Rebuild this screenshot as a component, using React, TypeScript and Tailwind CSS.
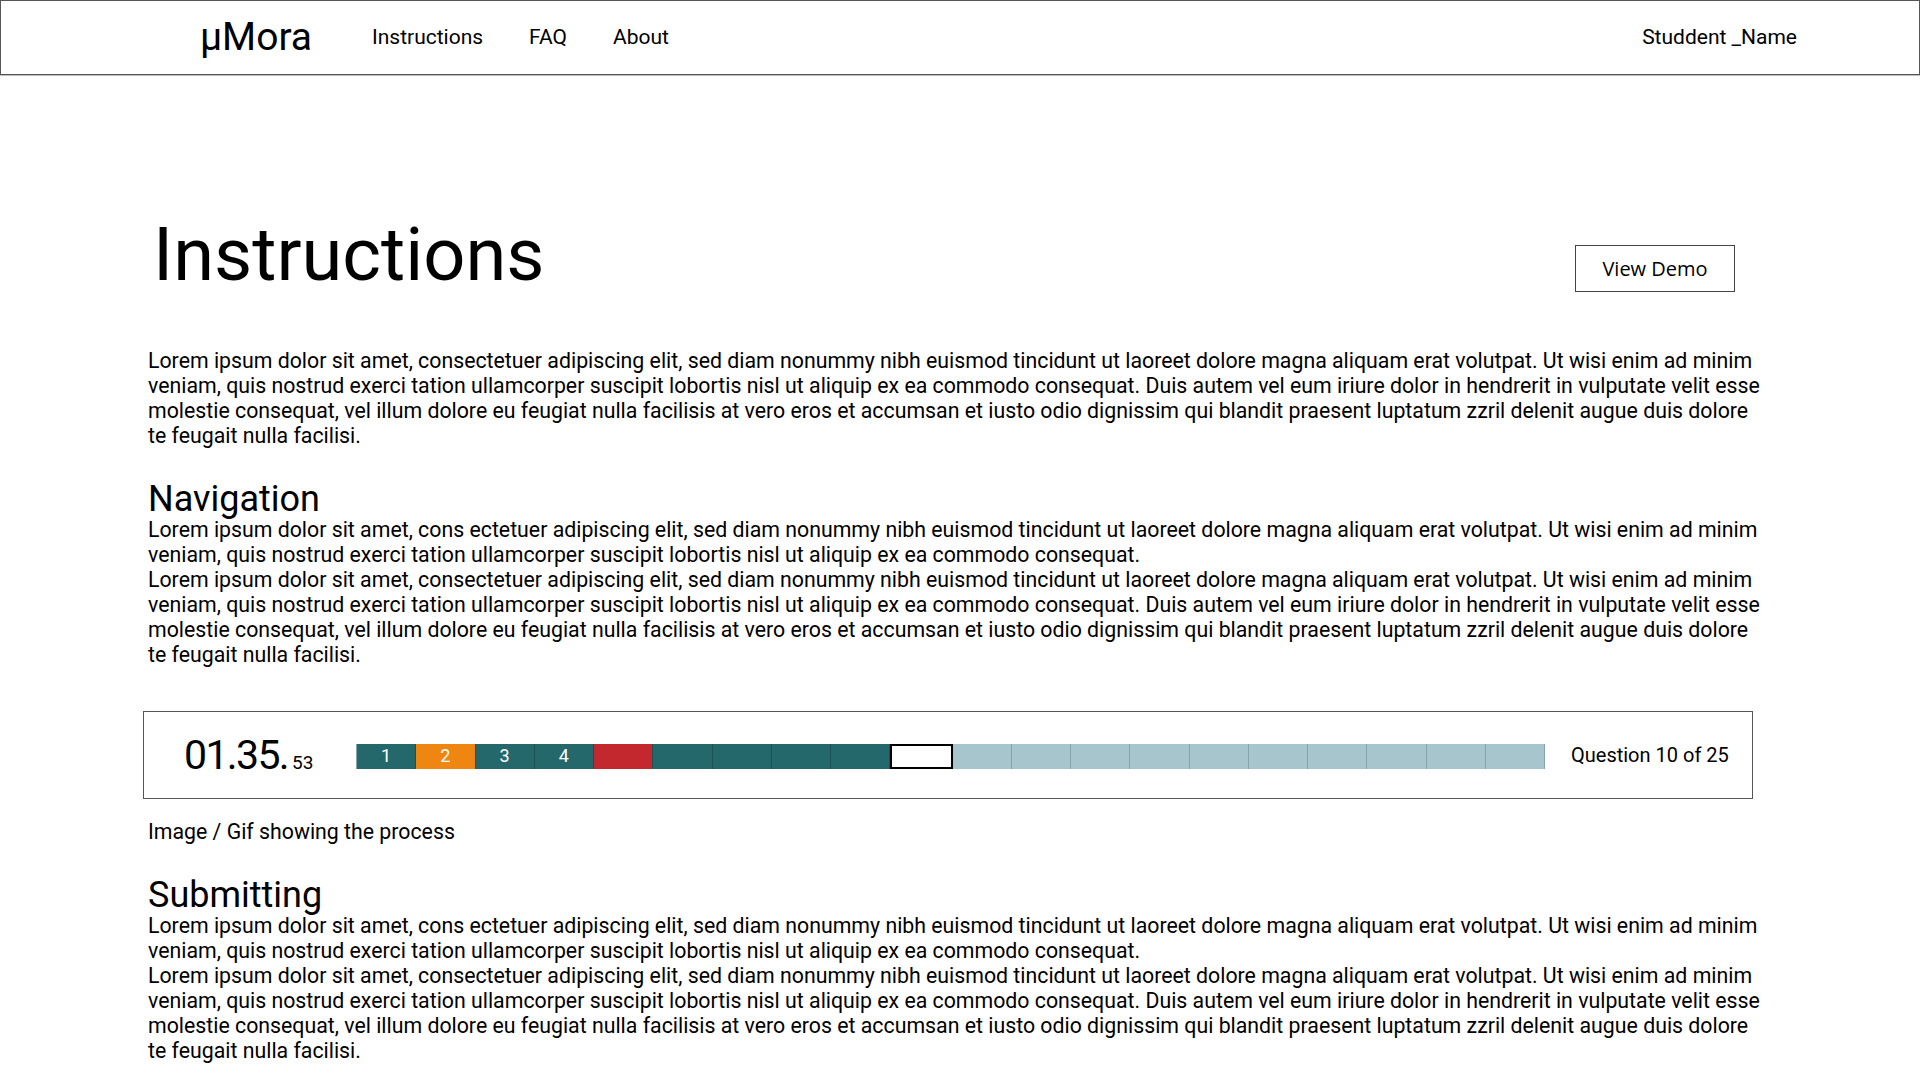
import React from "react";

// ─────────────────────────────────────────────────────────────
// Text
// ─────────────────────────────────────────────────────────────

const LOREM_LONG =
  "Lorem ipsum dolor sit amet, consectetuer adipiscing elit, sed diam nonummy nibh euismod tincidunt ut laoreet dolore magna aliquam erat volutpat. Ut wisi enim ad minim veniam, quis nostrud exerci tation ullamcorper suscipit lobortis nisl ut aliquip ex ea commodo consequat. Duis autem vel eum iriure dolor in hendrerit in vulputate velit esse molestie consequat, vel illum dolore eu feugiat nulla facilisis at vero eros et accumsan et iusto odio dignissim qui blandit praesent luptatum zzril delenit augue duis dolore te feugait nulla facilisi.";

const LOREM_SHORT =
  "Lorem ipsum dolor sit amet, cons ectetuer adipiscing elit, sed diam nonummy nibh euismod tincidunt ut laoreet dolore magna aliquam erat volutpat. Ut wisi enim ad minim veniam, quis nostrud exerci tation ullamcorper suscipit lobortis nisl ut aliquip ex ea commodo consequat.";

const font = "font-['Roboto','Liberation_Sans',sans-serif]";

// ─────────────────────────────────────────────────────────────
// Header
// ─────────────────────────────────────────────────────────────

function Header() {
  return (
    <header className="flex h-[75px] items-center border border-[#555] pl-[199px] pr-[122px] shadow-[0_1px_0_#bdbdbd]">
      <div className="w-[172px]">
        <span className="text-[39px] leading-none text-black">μMora</span>
      </div>
      <nav className="flex gap-[46px] text-[21px] text-black">
        <a>Instructions</a>
        <a>FAQ</a>
        <a>About</a>
      </nav>
      <div className="ml-auto text-[21px] text-black">Studdent _Name</div>
    </header>
  );
}

// ─────────────────────────────────────────────────────────────
// Progress bar demo
// ─────────────────────────────────────────────────────────────

type Cell = "done" | "flag" | "wrong" | "current" | "todo";

const cells: { state: Cell; label?: string }[] = [
  { state: "done", label: "1" },
  { state: "flag", label: "2" },
  { state: "done", label: "3" },
  { state: "done", label: "4" },
  { state: "wrong" },
  { state: "done" },
  { state: "done" },
  { state: "done" },
  { state: "done" },
  { state: "current" },
  ...Array.from({ length: 10 }, () => ({ state: "todo" as Cell })),
];

const cellStyle: Record<Cell, string> = {
  done: "bg-[#24686b] border-r border-[#1a5153]",
  flag: "bg-[#ef8612] border-r border-[#1a5153]",
  wrong: "bg-[#c3282f] border-r border-[#1a5153]",
  current: "bg-white border-2 border-black",
  todo: "bg-[#a7c5cd] border-r border-[#86a4ac]",
};

function ProgressDemo() {
  return (
    <div className="-ml-[5px] flex h-[88px] w-[1610px] items-center border border-[#555] pl-[40px] pr-[20px]">
      <div className="flex w-[172px] items-baseline text-black">
        <span className="text-[41px] leading-none tracking-[-0.04em]">01.35.</span>
        <span className="ml-[4px] text-[19px] leading-none">53</span>
      </div>
      <div className="mt-[2px] flex h-[25px] w-[1189px] border-l border-[#86a4ac]">
        {cells.map((c, i) => (
          <div
            key={i}
            className={`flex flex-1 items-center justify-center text-[18px] leading-none text-white ${cellStyle[c.state]}`}
          >
            {c.label}
          </div>
        ))}
      </div>
      <div className="ml-[26px] text-[20px] text-black">Question 10 of 25</div>
    </div>
  );
}

// ─────────────────────────────────────────────────────────────
// Page
// ─────────────────────────────────────────────────────────────

function Para({ children }: { children: React.ReactNode }) {
  return <p className="text-[21.3px] leading-[25px] text-black">{children}</p>;
}

export default function App() {
  return (
    <div className={`min-h-screen bg-white ${font}`}>
      <Header />

      <main className="ml-[148px] w-[1620px] pb-10">
        {/* Title */}
        <div className="mt-[143px] flex items-end justify-between pr-[33px]">
          <h1 className="ml-[5px] text-[74px] leading-none text-black">Instructions</h1>
          <button className="h-[47px] w-[160px] border border-[#444] font-['Open_Sans',sans-serif] text-[20px] text-black">
            View Demo
          </button>
        </div>

        <div className="mt-[56px]">
          <Para>{LOREM_LONG}</Para>
        </div>

        {/* Navigation */}
        <section className="mt-[34px]">
          <h2 className="text-[36px] leading-[35px] text-black">Navigation</h2>
          <Para>{LOREM_SHORT}</Para>
          <Para>{LOREM_LONG}</Para>
        </section>

        <div className="mt-[44px]">
          <ProgressDemo />
        </div>

        <p className="mt-[20px] text-[21.3px] leading-[25px] text-black">
          Image / Gif showing the process
        </p>

        {/* Submitting */}
        <section className="mt-[33px]">
          <h2 className="text-[36px] leading-[36px] text-black">Submitting</h2>
          <Para>{LOREM_SHORT}</Para>
          <Para>{LOREM_LONG}</Para>
        </section>
      </main>
    </div>
  );
}
